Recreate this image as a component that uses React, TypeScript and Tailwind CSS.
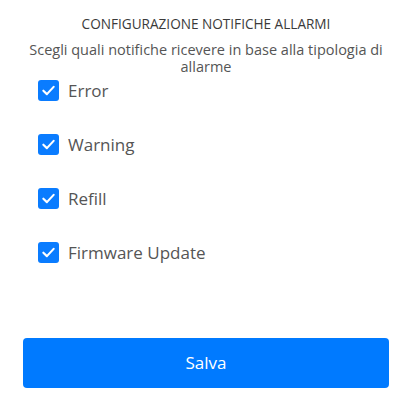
import React, { useState } from 'react';

const options = ['Error', 'Warning', 'Refill', 'Firmware Update'];

const CheckBox: React.FC<{ checked: boolean }> = ({ checked }) => (
	<span
		className={`flex h-[21px] w-[21px] items-center justify-center rounded-[3px] ${
			checked ? 'bg-[#0a7cff]' : 'border-2 border-[#999] bg-white'
		}`}
	>
		{checked && (
			<svg width="15" height="15" viewBox="0 0 14 14" fill="none">
				<path d="M2.2 7.2 L5.5 10.4 L11.8 3.6" stroke="white" strokeWidth="2" strokeLinecap="round" strokeLinejoin="round" />
			</svg>
		)}
	</span>
);

export default function App() {
	const [checked, setChecked] = useState<Record<string, boolean>>({
		Error: true,
		Warning: true,
		Refill: true,
		'Firmware Update': true,
	});

	return (
		<div
			className="flex h-[404px] w-[412px] flex-col bg-white"
			style={{ fontFamily: '"Open Sans", sans-serif' }}
		>
			<div className="pt-[14px] text-center text-[13.6px] leading-[20px] text-[#3a3a3a]">
				CONFIGURAZIONE NOTIFICHE ALLARMI
			</div>
			<p className="mx-auto mt-[7px] w-[370px] text-center text-[14.5px] leading-[17px] text-[#555]">
				Scegli quali notifiche ricevere in base alla tipologia di allarme
			</p>
			<div className="mt-[5px] flex flex-col gap-[33px] pl-[38px]">
				{options.map((o) => (
					<label
						key={o}
						className="flex h-[21px] cursor-pointer items-center gap-[9px] text-[17px] text-[#555]"
						onClick={() => setChecked((c) => ({ ...c, [o]: !c[o] }))}
					>
						<CheckBox checked={checked[o]} />
						<span>{o}</span>
					</label>
				))}
			</div>
			<button className="mx-[23px] mb-[16px] mt-auto h-[50px] rounded-[4px] bg-[#007aff] text-[17px] text-white">
				Salva
			</button>
		</div>
	);
}
